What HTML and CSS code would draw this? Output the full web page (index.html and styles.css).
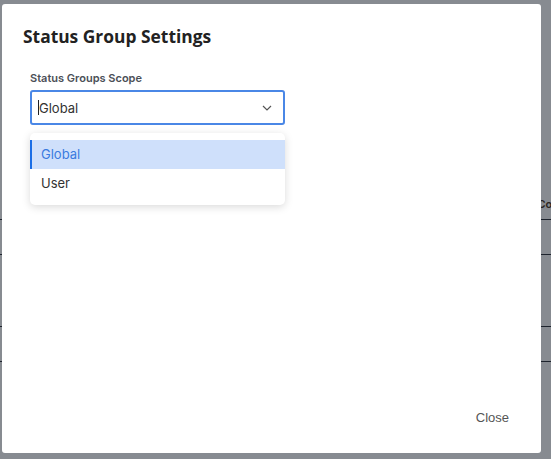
FILE: index.html
```
<!DOCTYPE html>
<html lang="en">
<head>
    <meta charset="UTF-8">
    <meta name="viewport" content="width=device-width, initial-scale=1.0">
    <title>Status Group Settings</title>
    <link rel="stylesheet" href="styles.css">
</head>
<body>
    <div class="page">
        <div class="page-row page-head"><span class="head-text">Con</span></div>
        <div class="page-row"></div>
        <div class="page-row page-row-tall"></div>
        <div class="page-row"></div>
    </div>

    <div class="backdrop"></div>

    <div class="modal">
        <h2 class="modal-title">Status Group Settings</h2>
        <div class="modal-body">
            <label class="field-label" for="scope">Status Groups Scope</label>
            <div class="select-wrap">
                <div class="select" id="scope">
                    <span class="caret"></span>
                    <span class="select-value">Global</span>
                    <svg class="chevron" width="10" height="6" viewBox="0 0 10 6">
                        <path d="M1 1 L5 5 L9 1" fill="none" stroke="#555" stroke-width="1.2"/>
                    </svg>
                </div>
                <ul class="menu">
                    <li class="menu-item selected">Global</li>
                    <li class="menu-item">User</li>
                </ul>
            </div>
        </div>
        <div class="modal-footer">
            <button class="btn-close" type="button">Close</button>
        </div>
    </div>
</body>
</html>
```

FILE: styles.css
```
body {
    margin: 0;
    padding: 0;
    font-family: Inter, "Noto Sans", sans-serif;
    background-color: #fff;
    overflow: hidden;
}

.page {
    height: 459px;
}

.page-row {
    border-bottom: 1px solid #2b2f36;
    height: 34px;
}

.page-head {
    height: 220px;
    display: flex;
    justify-content: flex-end;
    align-items: flex-end;
    box-sizing: border-box;
    padding-bottom: 8px;
}

.head-text {
    font-size: 11px;
    font-weight: 600;
    color: #4a3520;
    margin-right: -8px;
}

.page-row-tall {
    height: 71px;
}

.backdrop {
    position: fixed;
    inset: 0;
    background: rgba(15, 23, 35, 0.5);
}

.modal {
    position: fixed;
    left: 2px;
    top: 4px;
    width: 539px;
    height: 449px;
    background: #fff;
    border-radius: 3px;
    display: flex;
    flex-direction: column;
    box-sizing: border-box;
}

.modal-title {
    margin: 0;
    padding: 22px 21px 0;
    font-family: "Open Sans", sans-serif;
    font-size: 17.4px;
    font-weight: 700;
    color: #222;
    line-height: 20px;
}

.modal-body {
    padding: 25px 28px 0;
    flex: 1;
}

.field-label {
    display: block;
    font-size: 11px;
    font-weight: 600;
    color: #4b4f57;
    margin-bottom: 5px;
}

.select-wrap {
    position: relative;
    width: 255px;
}

.select {
    height: 35px;
    box-sizing: border-box;
    border: 2px solid #4a87e6;
    border-radius: 3px;
    display: flex;
    align-items: center;
    padding: 0 10px 0 6px;
}

.caret {
    width: 1px;
    height: 15px;
    background: #222;
}

.select-value {
    flex: 1;
    font-size: 13px;
    color: #333;
}

.chevron {
    margin-right: 1px;
}

.menu {
    position: absolute;
    left: 0;
    right: 0;
    top: 43px;
    margin: 0;
    padding: 7px 0 7px;
    list-style: none;
    background: #fff;
    border-radius: 5px;
    box-shadow: 0 2px 8px rgba(0, 0, 0, 0.15);
}

.menu-item {
    height: 29px;
    line-height: 29px;
    padding-left: 11px;
    font-size: 13px;
    color: #333;
}

.menu-item.selected {
    background: #cfe0fb;
    color: #3a7be0;
    border-left: 2px solid #1a6ee6;
    padding-left: 9px;
}

.modal-footer {
    display: flex;
    justify-content: flex-end;
    padding: 0 23px 22px;
}

.btn-close {
    background: none;
    border: none;
    font-family: "Liberation Sans", Arial, sans-serif;
    font-size: 13px;
    color: #555;
    padding: 6px 9px;
    cursor: pointer;
}
```
